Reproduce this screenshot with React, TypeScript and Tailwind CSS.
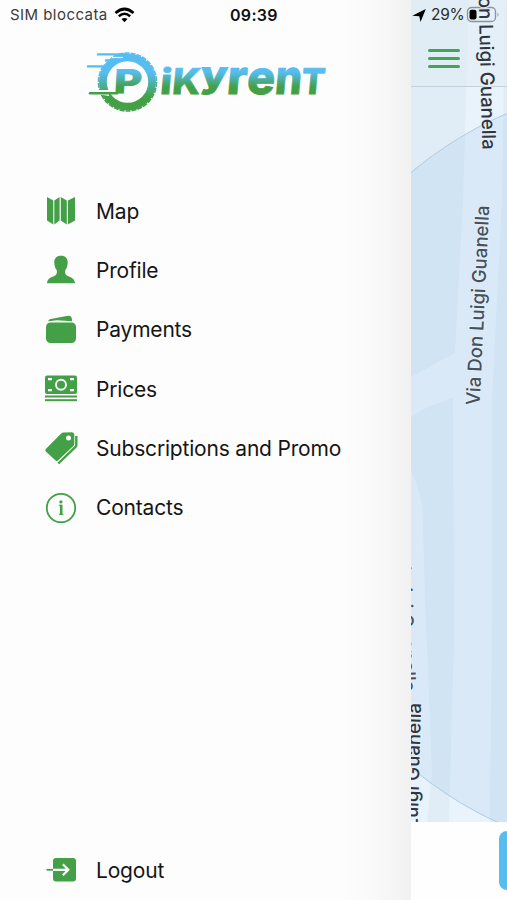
import type { ReactNode } from 'react'

type MenuItem = {
  label: string
  icon: ReactNode
}

const MapIcon = () => (
  <svg width="32" height="32" viewBox="0 0 32 32" fill="#43a047">
    <path d="M2 2 8.300 5.500v24L2 25.500zM9.300 5.500l5.300-3.500V25.500l-5.300 4zM15.800 2l6 3.500v24l-6-4zM22.900 5.500 30 2V25.500l-7.100 4z" />
  </svg>
)

const ProfileIcon = () => (
  <svg width="32" height="32" viewBox="0 0 32 32" fill="#43a047">
    <path d="M16 1.800c4.500 0 7 2.700 6.700 7.200-.2 3.300-1.200 5.700-2.500 7.300-.5 3 .2 4.900 3 6 3.900 1.300 6.300 2.700 6.800 7H2c.5-4.300 2.900-5.700 6.800-7 2.800-1.100 3.500-3 3-6C10.500 14.700 9.500 12.300 9.300 9 9 4.500 11.500 1.800 16 1.800z" />
  </svg>
)

const WalletIcon = () => (
  <svg width="32" height="32" viewBox="0 0 32 32" fill="#43a047">
    <path d="M3 7.200c.7-1.600 2-2.200 4-2.500L23 1.800c2.500-.4 3.700.9 4 3.600v1.800L12 6.300z" />
    <rect x="1" y="8.500" width="30" height="20.500" rx="4.500" />
  </svg>
)

const CashIcon = () => (
  <svg width="34" height="32" viewBox="0 0 34 32" fill="#43a047">
    <rect x="1" y="2.500" width="32" height="18.500" rx="2" />
    <rect x="1" y="22.500" width="32" height="2" />
    <rect x="1" y="26.200" width="32" height="2" />
    <g fill="none" stroke="#fdfdfd" strokeWidth="1.900">
      <circle cx="17" cy="11.800" r="5" />
      <path d="M4 6.200h4M26 6.200h4M4 17.200h4M26 17.200h4" strokeWidth="2.200" />
    </g>
  </svg>
)

const TagIcon = () => (
  <svg width="34" height="34" viewBox="0 0 34 34">
    <path
      d="M19.500 1.500 28 1.200Q30.300 1.400 30.300 3.500V12.500Q30.300 14 29.300 15L14 29.400Q12.600 30.500 11.300 29.300L1.800 20.600Q.5 19.300 1.800 18.100L17.200 2.600Q18.300 1.500 19.500 1.500z"
      fill="#43a047"
    />
    <path d="M32.300 5v9q0 1-.8 1.900L14.300 32.500" fill="none" stroke="#43a047" strokeWidth="2.400" />
    <circle cx="24.500" cy="7" r="2.500" fill="#fdfdfd" />
  </svg>
)

const InfoIcon = () => (
  <svg width="32" height="32" viewBox="0 0 32 32">
    <circle cx="16" cy="16" r="14.200" fill="none" stroke="#43a047" strokeWidth="1.800" />
    <circle cx="15.900" cy="9.900" r="1.600" fill="#43a047" />
    <path d="M13.800 13.300h2.500M14 22.300h4.400" fill="none" stroke="#43a047" strokeWidth="1" />
    <path d="M16.200 12.700v10.200" stroke="#43a047" strokeWidth="2.600" />
  </svg>
)

const LogoutIcon = () => (
  <svg width="32" height="32" viewBox="0 0 32 32">
    <rect x="8" y="4" width="23" height="23.500" rx="3" fill="#43a047" />
    <path d="M1.500 15.800H9" stroke="#43a047" strokeWidth="1.800" />
    <path d="M8 15.800h15M17.800 10.300l5.500 5.500-5.500 5.500" fill="none" stroke="#fdfdfd" strokeWidth="2.200" />
  </svg>
)

const items: MenuItem[] = [
  { label: 'Map', icon: <MapIcon /> },
  { label: 'Profile', icon: <ProfileIcon /> },
  { label: 'Payments', icon: <WalletIcon /> },
  { label: 'Prices', icon: <CashIcon /> },
  { label: 'Subscriptions and Promo', icon: <TagIcon /> },
  { label: 'Contacts', icon: <InfoIcon /> },
]

function Row({ item }: { item: MenuItem }) {
  return (
    <button className="flex h-[59.3px] items-center gap-[19px] text-left">
      <span className="flex w-8 shrink-0 justify-center [&>svg]:shrink-0">{item.icon}</span>
      <span className="whitespace-nowrap pt-px text-[21px] tracking-[-0.19px] text-[#151515]">{item.label}</span>
    </button>
  )
}

// each letter has its own size so that all of them share the same height
const letters = [
  { c: 'i', x: 159.5, w: 11.5, size: 35, y: 94.5 },
  { c: 'K', x: 171.5, w: 28, size: 35.5, y: 94.5 },
  { c: 'y', x: 199, w: 27, size: 36, y: 87.5 },
  { c: 'r', x: 226, w: 20, size: 47.5, y: 94.5 },
  { c: 'e', x: 246, w: 28, size: 46.5, y: 94.5 },
  { c: 'n', x: 274, w: 27, size: 47.5, y: 94.5 },
  { c: 'T', x: 300.5, w: 23.5, size: 35.5, y: 94.5 },
]

function Logo() {
  return (
    <svg width="250" height="70" viewBox="80 47 250 70" className="ml-20">
      <defs>
        <linearGradient id="ring" gradientUnits="userSpaceOnUse" x1="0" y1="52" x2="0" y2="112">
          <stop offset="0.35" stopColor="#55bdf0" />
          <stop offset="0.75" stopColor="#43a047" />
        </linearGradient>
        <linearGradient id="word" gradientUnits="userSpaceOnUse" x1="0" y1="68" x2="0" y2="95">
          <stop offset="0.15" stopColor="#55bdf0" />
          <stop offset="0.7" stopColor="#43a047" />
        </linearGradient>
      </defs>
      <circle cx="127.500" cy="82" r="24.600" fill="none" stroke="url(#ring)" strokeWidth="7.800" />
      <circle
        cx="127.500"
        cy="82"
        r="29"
        fill="none"
        stroke="url(#ring)"
        strokeWidth="1.600"
        strokeDasharray="4.900 1.173"
      />
      <path d="M96 57.300h14l-6 6h-8zM88 69h10" stroke="#fdfdfd" strokeWidth="2" fill="#fdfdfd" />
      <path d="M95 90h14v6l-9-1.500h-6z" fill="#fdfdfd" />
      <path d="M98 54.400h27M106 60.500h8M88 66.400h17" stroke="#55bdf0" strokeWidth="2.400" strokeLinecap="round" />
      <path d="M112 57.500h11" stroke="#fdfdfd" strokeWidth="1.200" />
      <path d="M90 93.200h27" stroke="#43a047" strokeWidth="2.500" strokeLinecap="round" />
      <g fontFamily="Inter, sans-serif" fontWeight="800" fill="url(#word)" stroke="url(#word)">
        <text
          transform="translate(114 0) skewX(-3)"
          x="4.500"
          y="93.500"
          fontSize="32.500"
          textLength="28"
          lengthAdjust="spacingAndGlyphs"
          strokeWidth="0.800"
        >
          P
        </text>
        <g transform="translate(8.300 0) skewX(-5)" strokeWidth="0.800">
          {letters.map((l) => (
            <text key={l.c} x={l.x} y={l.y} fontSize={l.size} textLength={l.w} lengthAdjust="spacingAndGlyphs">
              {l.c}
            </text>
          ))}
        </g>
      </g>
    </svg>
  )
}

function StreetMap() {
  return (
    <svg className="absolute inset-0" width="96" height="822" viewBox="411 0 96 822">
      <defs>
        <clipPath id="area">
          <circle cx="660" cy="470" r="388" />
        </clipPath>
        <g id="roads">
          <path d="M469 0H505L502 200 492 400V600L490 822H449L454 640 453 398Q430 404 411 417V377L455 353 463 200z" />
          <path d="M411 470Q423 495 423 525L425 600 432 770 427 822H411z" />
        </g>
      </defs>
      <rect x="411" width="96" height="822" fill="#e1edf6" />
      <use href="#roads" fill="#e8f3fc" />
      <g clipPath="url(#area)">
        <rect x="411" width="96" height="822" fill="#d1e4f3" />
        <use href="#roads" fill="#d9e9f8" />
      </g>
      <circle cx="660" cy="470" r="388" fill="none" stroke="#b0cbe2" strokeWidth="1" />
    </svg>
  )
}

function StreetLabels() {
  return (
    <svg
      className="pointer-events-none absolute inset-0"
      width="96"
      height="822"
      viewBox="411 0 96 822"
      fontFamily="Inter, sans-serif"
      fontSize="19"
      fontWeight="500"
      fill="#46515b"
    >
      <g stroke="#e6f1fb" strokeWidth="1.500" paintOrder="stroke">
        <text transform="translate(475.500 -50) rotate(88.600)" textLength="200" lengthAdjust="spacingAndGlyphs" fill="#30363c" y="-2">
          Via Don Luigi Guanella
        </text>
        <text transform="translate(479.500 405.500) rotate(-87.200)" textLength="200" lengthAdjust="spacingAndGlyphs">
          Via Don Luigi Guanella
        </text>
        <text transform="translate(394.500 492) rotate(87.700)" textLength="200" lengthAdjust="spacingAndGlyphs">
          Via Don Luigi Guanella
        </text>
        <text transform="translate(415.500 903) rotate(-88.400)" textLength="200" lengthAdjust="spacingAndGlyphs" fill="#30363c">
          Via Don Luigi Guanella
        </text>
      </g>
    </svg>
  )
}

export default function App() {
  return (
    <div className="flex h-[900px] w-[507px] overflow-hidden bg-[#fdfdfd] font-['Inter',sans-serif]">
      <aside className="flex w-[411px] shrink-0 flex-col bg-[linear-gradient(to_right,#fdfdfd_84%,#f8f8f8_93%,#f1f1f1)]">
        <div className="flex h-[30px] items-center pl-[10px] text-[15px] text-[#3b3b3b]">
          <span className="w-[99px] whitespace-nowrap tracking-[0.45px]">SIM bloccata</span>
          <svg className="ml-[5px]" width="21" height="16" viewBox="0 0 21 16" fill="none" stroke="#000">
            <path d="M1.500 6Q10.500-2 19.500 6" strokeWidth="2.700" />
            <path d="M4.800 9.300q5.700-5 11.400 0" strokeWidth="2.500" />
            <path d="M7.500 12 10.500 15.200 13.500 12q-3-2.200-6 0z" fill="#000" stroke="none" />
          </svg>
          <span className="ml-[95px] text-[16px] font-semibold tracking-[0.3px] text-[#111]">09:39</span>
        </div>

        <div className="pt-[17px]">
          <Logo />
        </div>

        <nav className="mt-[64.400px] flex flex-col pl-[45px]">
          {items.map((item) => (
            <Row key={item.label} item={item} />
          ))}
        </nav>

        <div className="mt-auto pl-[45px]">
          <Row item={{ label: 'Logout', icon: <LogoutIcon /> }} />
        </div>
      </aside>

      <main className="flex w-24 shrink-0 flex-col">
        <section className="relative h-[822px] overflow-hidden">
          <StreetMap />
          <header className="relative h-[87px] border-b border-[#c3d0da] bg-[#e1ecf5]/60">
            <div className="flex h-[30px] items-center pl-px text-[15.5px] tracking-[-0.3px] text-[#2b2b2b]">
              <svg width="14" height="13" viewBox="0 0 14 13">
                <path d="M13.800 0 8.500 13 7.300 7.300.3 6.800z" fill="#000" />
              </svg>
              <span className="ml-[5px] w-[35px] whitespace-nowrap">29%</span>
              <svg className="shrink-0" width="34" height="18" viewBox="0 0 34 18">
                <rect x="1.500" y="1.500" width="28" height="14" rx="4" fill="none" stroke="#8d9499" strokeWidth="1.300" />
                <rect x="3.500" y="3.700" width="7" height="9.800" rx="2" fill="#000" />
                <path d="M31.500 6.500q2 2.200 0 4.500z" fill="#8d9499" />
              </svg>
            </div>
            <div className="mt-[19px] ml-[17px] flex w-8 flex-col gap-[5.500px]">
              <span className="h-[2.500px] rounded-full bg-[#43a554]" />
              <span className="h-[2.500px] rounded-full bg-[#43a554]" />
              <span className="h-[2.500px] rounded-full bg-[#43a554]" />
            </div>
          </header>
          <StreetLabels />
        </section>
        <footer className="flex flex-1 justify-end overflow-hidden bg-[#fefefe] pt-[9px]">
          <button className="h-[59px] w-2 shrink-0 rounded-l-[9px] bg-[#55bdf0]" />
        </footer>
      </main>
    </div>
  )
}
